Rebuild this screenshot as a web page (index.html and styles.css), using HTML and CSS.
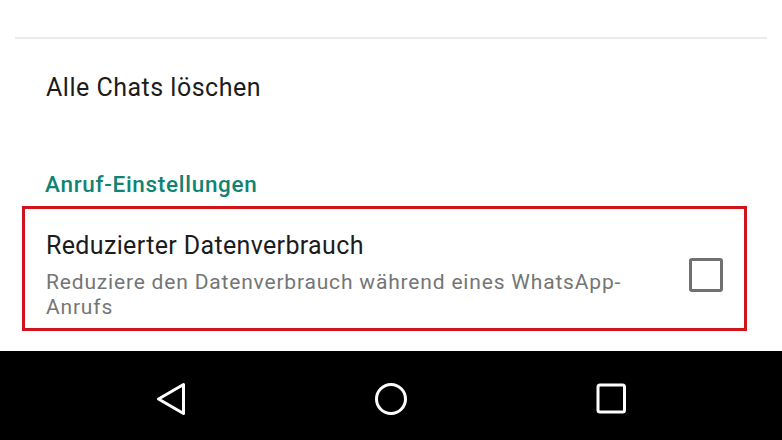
FILE: index.html
```html
<!DOCTYPE html>
<html lang="de">
<head>
<meta charset="utf-8">
<title>Einstellungen</title>
<link rel="stylesheet" href="styles.css">
</head>
<body>
<div class="screen">
  <div class="content">
    <div class="top-space"></div>
    <div class="divider"></div>
    <div class="item-simple">Alle Chats löschen</div>
    <div class="section-header">Anruf-Einstellungen</div>
    <div class="highlight">
      <div class="pref-row">
        <div class="pref-text">
          <div class="pref-title">Reduzierter Datenverbrauch</div>
          <div class="pref-summary">Reduziere den Datenverbrauch während eines WhatsApp-Anrufs</div>
        </div>
        <div class="checkbox"></div>
      </div>
    </div>
  </div>
  <div class="navbar">
    <div class="nav-slot">
      <svg class="nav-icon" viewBox="0 0 40 40" width="40" height="40" aria-hidden="true">
        <polygon points="7.5,20 32.5,5.5 32.5,34.5" fill="none" stroke="#fff" stroke-width="3" stroke-linejoin="round"/>
      </svg>
    </div>
    <div class="nav-slot">
      <svg class="nav-icon" viewBox="0 0 40 40" width="40" height="40" aria-hidden="true">
        <circle cx="20" cy="20" r="14.5" fill="none" stroke="#fff" stroke-width="3"/>
      </svg>
    </div>
    <div class="nav-slot">
      <svg class="nav-icon" viewBox="0 0 40 40" width="40" height="40" aria-hidden="true">
        <rect x="7" y="6" width="26.5" height="27" rx="2" fill="none" stroke="#fff" stroke-width="3"/>
      </svg>
    </div>
  </div>
</div>
</body>
</html>
```
FILE: styles.css
```css
html, body {
  margin: 0;
  padding: 0;
  background: #ffffff;
}
body {
  font-family: Roboto, "Noto Sans", "Liberation Sans", sans-serif;
  width: 782px;
  height: 440px;
  overflow: hidden;
}
.screen {
  display: flex;
  flex-direction: column;
  height: 440px;
}
.content {
  height: 351px;
  display: flex;
  flex-direction: column;
}
.top-space {
  height: 37px;
}
.divider {
  height: 2px;
  margin: 0 15px;
  background: #ebebeb;
}
.item-simple {
  padding: 35px 0 0 46px;
  font-size: 25px;
  line-height: 28px;
  letter-spacing: 0.5px;
  color: #1c1c1c;
}
.section-header {
  margin-top: 70px;
  padding-left: 45px;
  font-size: 22.5px;
  line-height: 24px;
  letter-spacing: 0.7px;
  font-weight: 500;
  color: #128272;
}
.highlight {
  margin: 10px 0 0 22px;
  width: 719px;
  height: 119px;
  border: 3px solid #d1131d;
}
.pref-row {
  display: flex;
  align-items: flex-start;
  padding: 23px 21px 0 21px;
}
.pref-text {
  flex: 1;
  margin-right: 38px;
}
.pref-title {
  font-size: 25px;
  line-height: 28px;
  letter-spacing: 0.35px;
  color: #1c1c1c;
}
.pref-summary {
  margin-top: 10px;
  font-size: 21px;
  line-height: 25px;
  letter-spacing: 0.82px;
  color: #757575;
}
.checkbox {
  margin-top: 26px;
  width: 28px;
  height: 28px;
  border: 3.5px solid #707070;
  border-radius: 3px;
  flex: none;
}
.navbar {
  height: 89px;
  background: #000000;
  display: grid;
  grid-template-columns: repeat(3, 220px);
  justify-content: center;
  align-items: center;
  padding-top: 6px;
  box-sizing: border-box;
}
.nav-slot {
  display: flex;
  justify-content: center;
  align-items: center;
}
.nav-icon {
  display: block;
}
```
